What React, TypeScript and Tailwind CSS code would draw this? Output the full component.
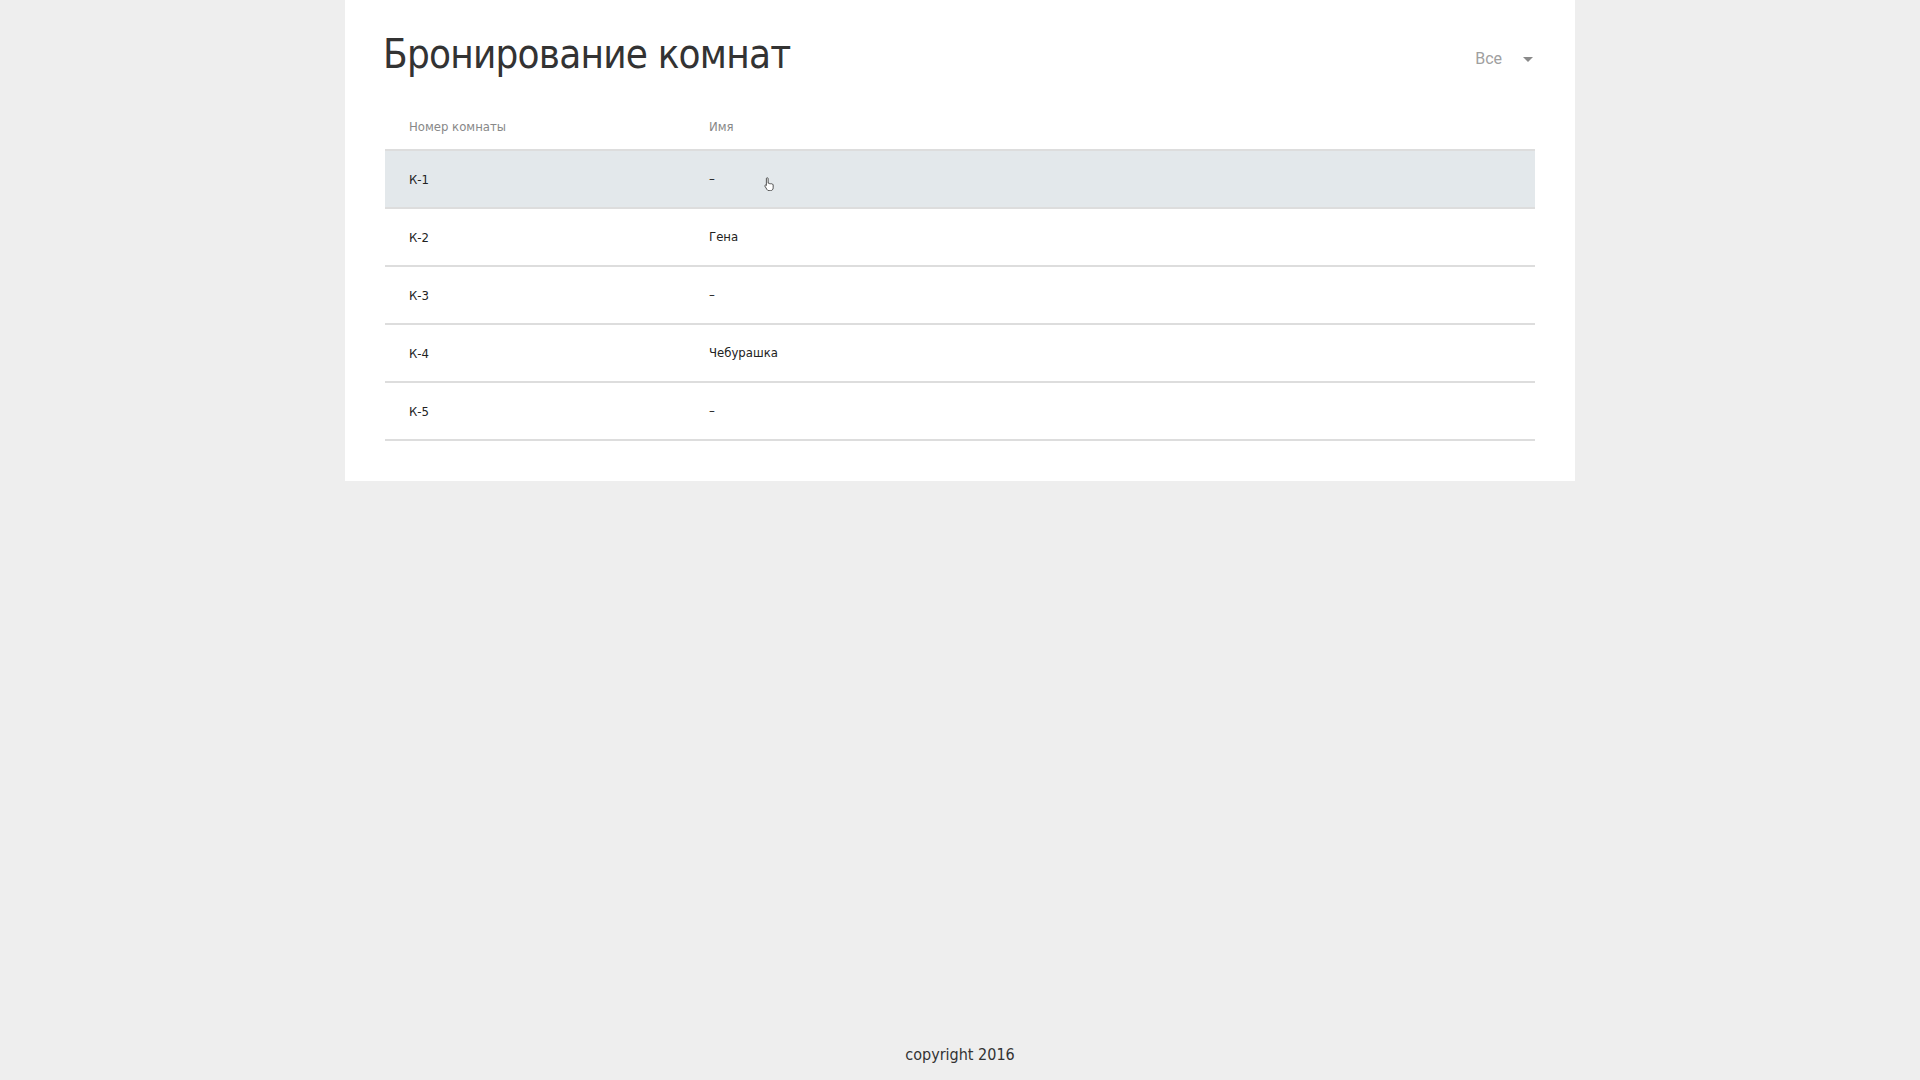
import React from "react";

interface Booking {
  room: string;
  name: string;
}

const bookings: Booking[] = [
  { room: "К-1", name: "–" },
  { room: "К-2", name: "Гена" },
  { room: "К-3", name: "–" },
  { room: "К-4", name: "Чебурашка" },
  { room: "К-5", name: "–" },
];

const font = { fontFamily: '"DejaVu Sans Condensed", "DejaVu Sans", sans-serif' };

const App: React.FC = (): React.ReactElement => {
  return (
    <div className="min-h-screen flex flex-col bg-[#eeeeee]" style={font}>
      <div className="w-[1230px] mx-auto bg-white px-10 pt-[30px] pb-10">
        <div className="flex items-start justify-between">
          <h1 className="text-[40px] leading-[48px] tracking-[-0.8px] text-[#333333] -ml-[2px]">
            Бронирование комнат
          </h1>
          <div className="flex items-center mt-[17px] mr-[2px] cursor-pointer">
            <span
              className="text-[16px] text-[#a0a0a0]"
              style={{ fontFamily: "Roboto, sans-serif" }}
            >
              Все
            </span>
            <span className="ml-[21px] w-0 h-0 border-l-[5px] border-r-[5px] border-t-[5px] border-l-transparent border-r-transparent border-t-[#8a8a8a]" />
          </div>
        </div>

        <div className="mt-[27px] text-[13px]">
          <div className="flex items-center h-[44px] text-[#888888]">
            <div className="w-[300px] pl-6">Номер комнаты</div>
            <div className="pl-6">Имя</div>
          </div>
          <div className="border-t-2 border-[#dddddd]">
            {bookings.map((b, i) => (
              <div
                key={b.room}
                className={
                  "flex items-center h-[58px] border-b-2 border-[#dddddd] text-[#222222] cursor-pointer " +
                  (i === 0 ? "bg-[#e3e8eb]" : "bg-white hover:bg-[#e3e8eb]")
                }
              >
                <div className="w-[300px] pl-6 pt-[1px]">{b.room}</div>
                <div className="pl-6 relative flex-1">
                  {b.name}
                  {i === 0 && (
                    <svg
                      className="absolute left-[79px] top-[7px]"
                      width="11"
                      height="15"
                      viewBox="0 0 12 15"
                    >
                      <path
                        d="M3.5 1.2c.6 0 1 .4 1 1v5l.4-.1c.6-.1 1 .2 1.1.7.4-.3 1-.3 1.4.1.4-.3 1.1-.2 1.4.3.5-.2 1.2.1 1.2.8v3.2c0 1.8-1.2 3.1-3 3.1H5.4c-1 0-1.7-.5-2.2-1.3L1 10.4c-.3-.5 0-1.1.6-1.2.4 0 .8.2 1 .5V2.2c0-.6.4-1 .9-1z"
                        fill="#ffffff"
                        stroke="#333333"
                        strokeWidth="0.9"
                      />
                    </svg>
                  )}
                </div>
              </div>
            ))}
          </div>
        </div>
      </div>
      <div className="flex-1" />
      <footer className="text-center text-[16px] text-[#333333] pb-[13px]">copyright 2016</footer>
    </div>
  );
};

export default App;
